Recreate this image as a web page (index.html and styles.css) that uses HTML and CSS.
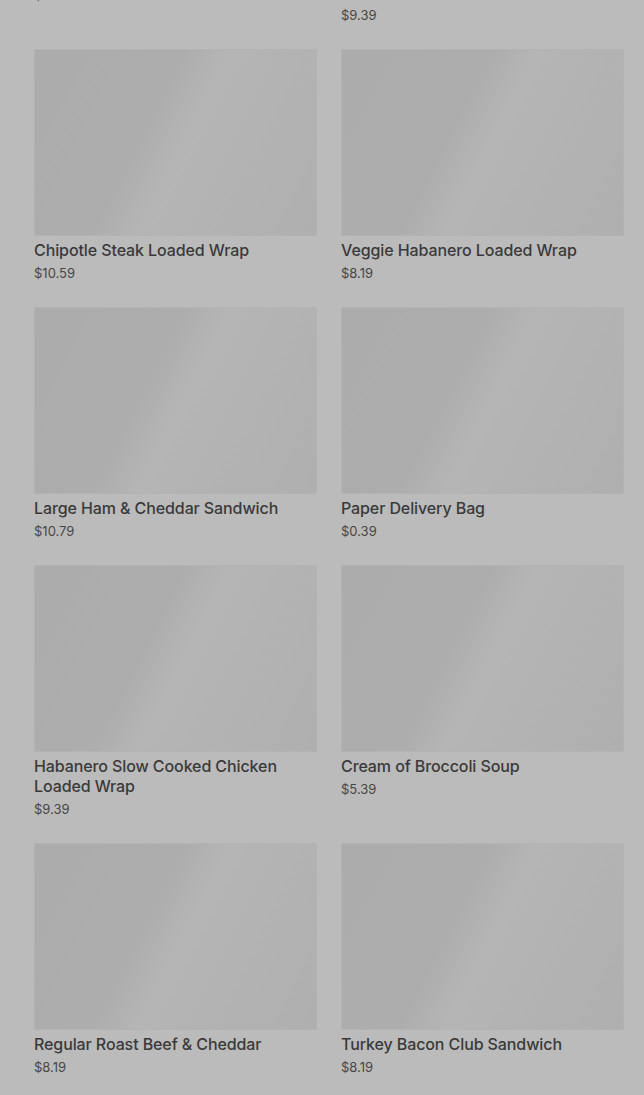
FILE: index.html
```html
<!DOCTYPE html>
<html lang="en">
<head>
    <meta charset="UTF-8">
    <meta name="viewport" content="width=device-width, initial-scale=1.0">
    <title>Menu</title>
    <link rel="stylesheet" href="styles.css">
</head>
<body>
    <div id="menu">
        <div class="item">
            <div class="thumb"></div>
            <div class="name">Regular Turkey Sandwich</div>
            <div class="price">$9.39</div>
        </div>
        <div class="item">
            <div class="thumb"></div>
            <div class="name">Large Oven Roasted Turkey Club Sandwich</div>
            <div class="price">$9.39</div>
        </div>

        <div class="item">
            <div class="thumb"></div>
            <div class="name">Chipotle Steak Loaded Wrap</div>
            <div class="price">$10.59</div>
        </div>
        <div class="item">
            <div class="thumb"></div>
            <div class="name">Veggie Habanero Loaded Wrap</div>
            <div class="price">$8.19</div>
        </div>

        <div class="item">
            <div class="thumb"></div>
            <div class="name">Large Ham &amp; Cheddar Sandwich</div>
            <div class="price">$10.79</div>
        </div>
        <div class="item">
            <div class="thumb"></div>
            <div class="name">Paper Delivery Bag</div>
            <div class="price">$0.39</div>
        </div>

        <div class="item">
            <div class="thumb"></div>
            <div class="name">Habanero Slow Cooked Chicken Loaded Wrap</div>
            <div class="price">$9.39</div>
        </div>
        <div class="item">
            <div class="thumb"></div>
            <div class="name">Cream of Broccoli Soup</div>
            <div class="price">$5.39</div>
        </div>

        <div class="item">
            <div class="thumb"></div>
            <div class="name">Regular Roast Beef &amp; Cheddar</div>
            <div class="price">$8.19</div>
        </div>
        <div class="item">
            <div class="thumb"></div>
            <div class="name">Turkey Bacon Club Sandwich</div>
            <div class="price">$8.19</div>
        </div>
    </div>
</body>
</html>
```

FILE: styles.css
```css
body {
    margin: 0;
    background-color: #bbbbbb;
    font-family: Inter, "Noto Sans", sans-serif;
    overflow: hidden;
}

/* page is scrolled part way down the list */
#menu {
    display: grid;
    grid-template-columns: 283px 283px;
    column-gap: 24px;
    row-gap: 24px;
    align-items: start;
    padding: 0 20px 0 34px;
    margin-top: -229px;
}

.item {
    display: flex;
    flex-direction: column;
}

/* loading shimmer placeholder */
.thumb {
    height: 187px;
    background: linear-gradient(117deg, #acacac 0%, #adadad 40%, #b5b5b5 52%, #b3b3b3 68%, #afafaf 100%);
    box-shadow: inset 0 0 0 1px #b3b3b3;
}

.name {
    margin-top: 4px;
    font-size: 16px;
    line-height: 20px;
    font-weight: 500;
    color: #3a3a3a;
    letter-spacing: -0.1px;
}

.price {
    margin-top: 3px;
    font-size: 13px;
    line-height: 20px;
    color: #474747;
}
```
